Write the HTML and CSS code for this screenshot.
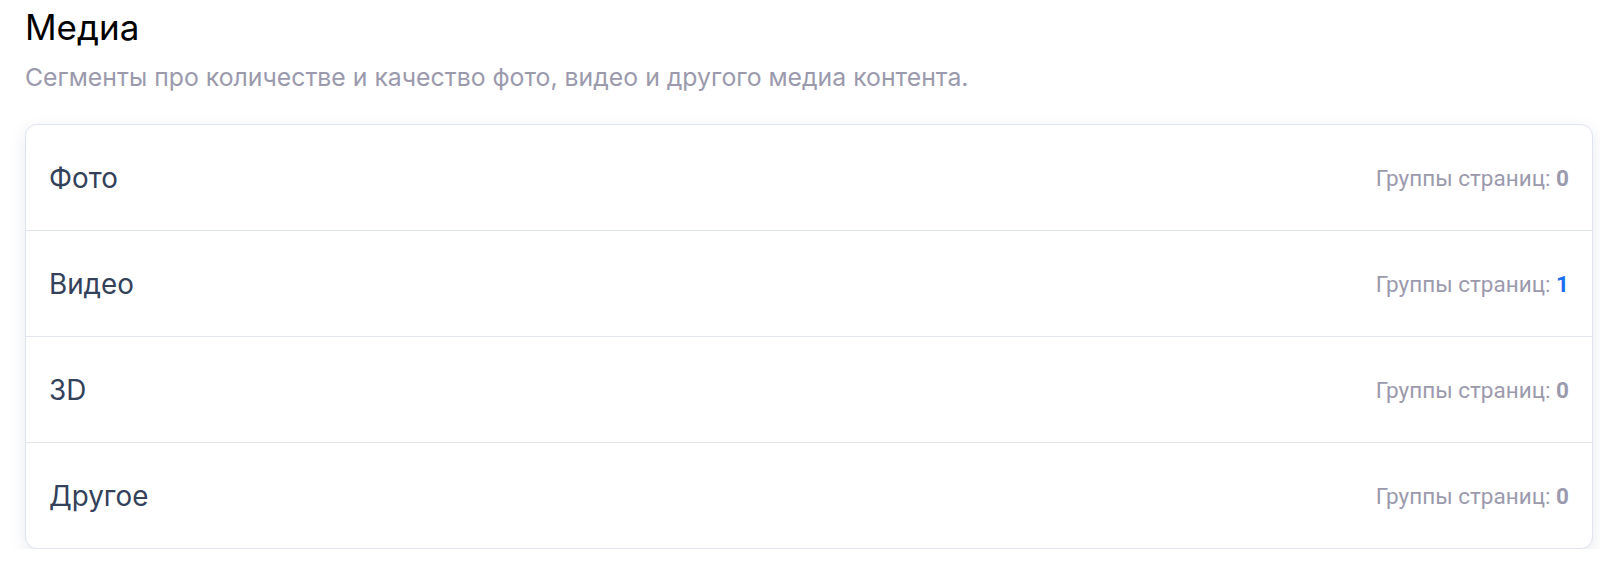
FILE: index.html
```html
<!DOCTYPE html>
<html lang="ru">
<head>
    <meta charset="UTF-8">
    <title>Медиа</title>
    <link rel="stylesheet" href="styles.css">
</head>
<body>
    <div class="page">
        <h1 class="title">Медиа</h1>
        <p class="subtitle">Сегменты про количестве и качество фото, видео и другого медиа контента.</p>
        <div class="card">
            <div class="row">
                <span class="row-name">Фото</span>
                <span class="row-count">Группы страниц: <b>0</b></span>
            </div>
            <div class="row">
                <span class="row-name">Видео</span>
                <span class="row-count">Группы страниц: <b class="active">1</b></span>
            </div>
            <div class="row">
                <span class="row-name">3D</span>
                <span class="row-count">Группы страниц: <b>0</b></span>
            </div>
            <div class="row">
                <span class="row-name">Другое</span>
                <span class="row-count">Группы страниц: <b>0</b></span>
            </div>
        </div>
    </div>
</body>
</html>
```

FILE: styles.css
```css
body {
    background: #fff;
    font-family: Inter, Roboto, sans-serif;
    margin: 0;
    padding: 0;
}
.page {
    padding: 9px 7px 0 25px;
}
.title {
    font-size: 35px;
    font-weight: 400;
    color: #000;
    margin: 0;
    line-height: 36px;
}
.subtitle {
    font-size: 24.8px;
    color: #9b9aad;
    margin: 17px 0 0 0;
    line-height: 30px;
}
.card {
    margin-top: 32px;
    background: #fff;
    border: 1px solid #dfe4f0;
    border-radius: 12px;
    box-shadow: 0 5px 16px rgba(30, 50, 90, 0.1);
}
.row {
    display: flex;
    align-items: center;
    justify-content: space-between;
    height: 105px;
    padding: 0 23px;
    border-bottom: 1px solid #e0e5ef;
}
.row:last-child {
    border-bottom: none;
}
.row-name {
    font-size: 27.8px;
    color: #33415a;
}
.row-count {
    font-family: Roboto, sans-serif;
    font-size: 22.5px;
    color: #9b9aad;
}
.row-count b {
    font-weight: 700;
}
.row-count b.active {
    color: #1a6ff0;
}
```
